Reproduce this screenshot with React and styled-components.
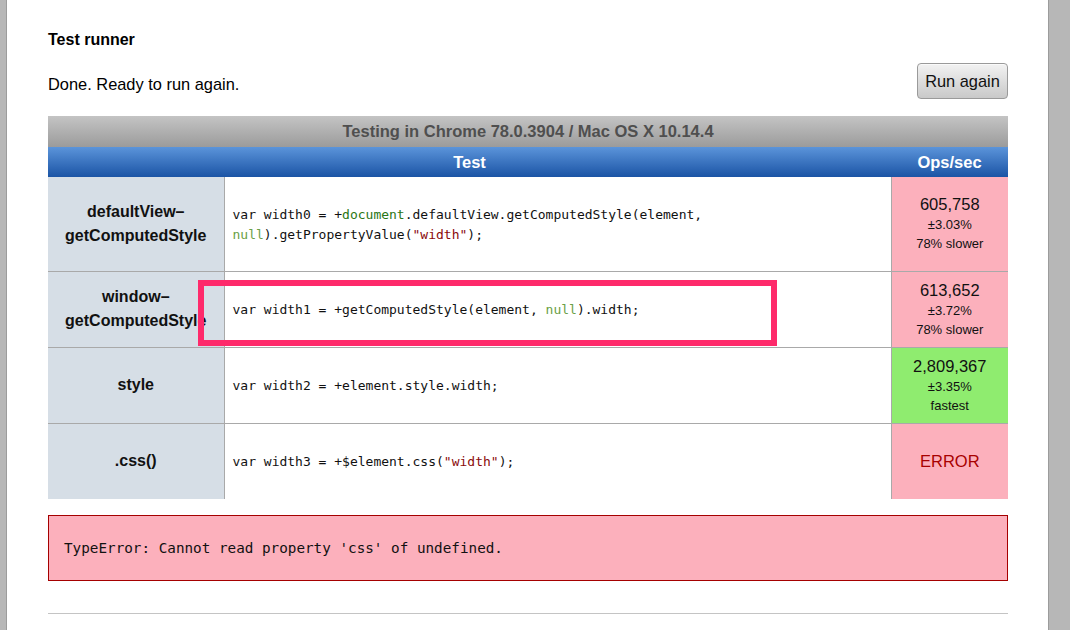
import React from 'react';
import styled, { createGlobalStyle } from 'styled-components';

const Global = createGlobalStyle`
  html, body { margin: 0; padding: 0; background: #fff; }
  body { font-family: "Liberation Sans", Arial, Helvetica, sans-serif; color: #000; }
`;

const Frame = styled.div`
  display: grid;
  grid-template-columns: 7px 1fr 22px;
  height: 630px;
  overflow: hidden;
`;

const SideBar = styled.div`
  background: #b7b7b7;
  box-shadow: inset ${(p) => (p.$side === 'left' ? '-1px' : '1px')} 0 0 #9c9c9c;
`;

const Main = styled.main`
  padding: 31px 40px 0 41px;
  min-width: 0;
`;

const Title = styled.h2`
  margin: 0;
  font-size: 16px;
  line-height: 18px;
  font-weight: bold;
`;

const StatusRow = styled.div`
  margin-top: 14px;
  height: 36px;
  display: flex;
  align-items: center;
  justify-content: space-between;
`;

const StatusText = styled.p`
  margin: 0;
  padding-top: 6px;
  font-size: 16.4px;
  line-height: 20px;
`;

const RunButton = styled.button`
  height: 36px;
  width: 91px;
  padding: 0;
  font-family: inherit;
  font-size: 16.4px;
  color: #111;
  border: 1px solid #9a9a9a;
  border-radius: 4px;
  background: linear-gradient(#f2f2f2, #c9c9c9);
  box-shadow: inset 0 1px 0 #fafafa;
`;

const TableWrap = styled.div`
  position: relative;
  margin-top: 17px;
`;

const Table = styled.table`
  width: 960px;
  border-collapse: collapse;
  table-layout: fixed;
  border-spacing: 0;
`;

const Caption = styled.caption`
  height: 31px;
  line-height: 31px;
  font-size: 16.5px;
  font-weight: bold;
  color: #4f4f4f;
  background: linear-gradient(#c4c4c4, #9b9b9b);
  padding: 0;
`;

const HeadCell = styled.th`
  height: 30px;
  padding: 0;
  font-size: 16.5px;
  font-weight: bold;
  color: #fff;
  text-align: center;
  background: linear-gradient(#5b94da, #1b54a5);
`;

const Row = styled.tr`
  & + & > td {
    border-top: 1px solid #a9a9a9;
  }
`;

const NameCell = styled.td`
  height: ${(p) => p.$h}px;
  padding: 0 4px;
  box-sizing: border-box;
  background: #d6dee6;
  border-right: 1px solid #a9a9a9;
  text-align: center;
  vertical-align: middle;
  font-size: 16px;
  line-height: 24px;
  font-weight: bold;
  color: #111;
  white-space: nowrap;
`;

const CodeCell = styled.td`
  padding: 2px 8px 0;
  vertical-align: middle;
  background: #fff;
  font-family: "DejaVu Sans Mono", "Liberation Mono", monospace;
  font-size: 13px;
  line-height: 20px;
  color: #111;
`;

const Tok = styled.span`
  color: ${(p) =>
    p.$k === 'global' ? '#2a7614' : p.$k === 'null' ? '#6aa046' : p.$k === 'str' ? '#8a0a0a' : 'inherit'};
`;

const OpsCell = styled.td`
  padding: 0;
  border-left: 1px solid #a9a9a9;
  text-align: center;
  vertical-align: middle;
  background: ${(p) => (p.$state === 'fast' ? '#8fec6f' : '#fcb0bc')};
  color: #111;
`;

const OpsNumber = styled.div`
  font-size: 16.5px;
  line-height: 21px;
`;

const OpsSmall = styled.div`
  font-size: 13px;
  line-height: 19px;
`;

const ErrorText = styled.div`
  font-size: 16.5px;
  line-height: 20px;
  color: #a80000;
`;

const Highlight = styled.div`
  position: absolute;
  left: 150px;
  top: 164px;
  width: 579px;
  height: 66px;
  box-sizing: border-box;
  border: 6px solid #fe2a6b;
  pointer-events: none;
`;

const ErrorBox = styled.div`
  margin-top: 16px;
  height: 66px;
  box-sizing: border-box;
  border: 1px solid #a50000;
  background: #fcb0bc;
  padding-left: 15px;
  font-family: "DejaVu Sans Mono", "Liberation Mono", monospace;
  font-size: 14.3px;
  line-height: 64px;
  color: #111;
`;

const Rule = styled.hr`
  margin: 32px 0 0;
  border: 0;
  border-top: 1px solid #c4c4c4;
  width: 960px;
`;

const tests = [
  {
    name: ['defaultView–', 'getComputedStyle'],
    h: 94,
    code: (
      <>
        var width0 = +<Tok $k="global">document</Tok>.defaultView.getComputedStyle(element,{' '}
        <Tok $k="null">null</Tok>).getPropertyValue(<Tok $k="str">"width"</Tok>);
      </>
    ),
    ops: { n: '605,758', rme: '±3.03%', note: '78% slower', state: 'slow' },
  },
  {
    name: ['window–', 'getComputedStyle'],
    h: 76,
    code: (
      <>
        var width1 = +getComputedStyle(element, <Tok $k="null">null</Tok>).width;
      </>
    ),
    ops: { n: '613,652', rme: '±3.72%', note: '78% slower', state: 'slow' },
  },
  {
    name: ['style'],
    h: 76,
    code: <>var width2 = +element.style.width;</>,
    ops: { n: '2,809,367', rme: '±3.35%', note: 'fastest', state: 'fast' },
  },
  {
    name: ['.css()'],
    h: 76,
    code: (
      <>
        var width3 = +$element.css(<Tok $k="str">"width"</Tok>);
      </>
    ),
    ops: { error: true, state: 'error' },
  },
];

export default function App() {
  return (
    <>
      <Global />
      <Frame>
        <SideBar $side="left" />
        <Main>
          <Title>Test runner</Title>
          <StatusRow>
            <StatusText>Done. Ready to run again.</StatusText>
            <RunButton>Run again</RunButton>
          </StatusRow>
          <TableWrap>
            <Table>
              <Caption>Testing in Chrome 78.0.3904 / Mac OS X 10.14.4</Caption>
              <colgroup>
                <col style={{ width: 176 }} />
                <col style={{ width: 667 }} />
                <col style={{ width: 117 }} />
              </colgroup>
              <thead>
                <tr>
                  <HeadCell colSpan={2}>Test</HeadCell>
                  <HeadCell>Ops/sec</HeadCell>
                </tr>
              </thead>
              <tbody>
                {tests.map((t, i) => (
                  <Row key={i}>
                    <NameCell $h={t.h}>
                      {t.name.map((l, j) => (
                        <div key={j}>{l}</div>
                      ))}
                    </NameCell>
                    <CodeCell>{t.code}</CodeCell>
                    <OpsCell $state={t.ops.state}>
                      {t.ops.error ? (
                        <ErrorText>ERROR</ErrorText>
                      ) : (
                        <>
                          <OpsNumber>{t.ops.n}</OpsNumber>
                          <OpsSmall>{t.ops.rme}</OpsSmall>
                          <OpsSmall>{t.ops.note}</OpsSmall>
                        </>
                      )}
                    </OpsCell>
                  </Row>
                ))}
              </tbody>
            </Table>
            <Highlight />
          </TableWrap>
          <ErrorBox>TypeError: Cannot read property 'css' of undefined.</ErrorBox>
          <Rule />
        </Main>
        <SideBar $side="right" />
      </Frame>
    </>
  );
}
